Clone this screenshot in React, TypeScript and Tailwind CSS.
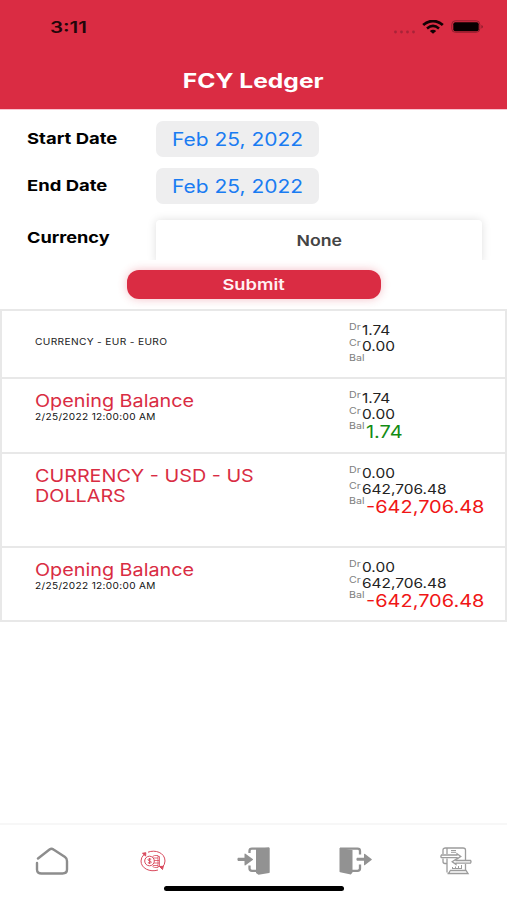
import type { ReactNode } from "react";

const ENTRIES = [
  {
    title: "CURRENCY - EUR - EURO",
    small: true,
    date: "",
    dr: "1.74",
    cr: "0.00",
    bal: "",
    height: "h-[68px]",
  },
  {
    title: "Opening Balance",
    date: "2/25/2022 12:00:00 AM",
    dr: "1.74",
    cr: "0.00",
    bal: "1.74",
    height: "h-[75px]",
  },
  {
    title: "CURRENCY - USD - US DOLLARS",
    date: "",
    dr: "0.00",
    cr: "642,706.48",
    bal: "-642,706.48",
    height: "h-[94px]",
  },
  {
    title: "Opening Balance",
    date: "2/25/2022 12:00:00 AM",
    dr: "0.00",
    cr: "642,706.48",
    bal: "-642,706.48",
    height: "h-[72px]",
  },
];

type Entry = (typeof ENTRIES)[number];

// Single line of widened lettering; the scale itself comes in through className
function Wide({ className, children }: { className: string; children: ReactNode }) {
  return <span className={`block w-max whitespace-nowrap ${className}`}>{children}</span>;
}

function StatusBar() {
  return (
    <div className="flex h-[54px] items-center pl-[50px] pr-[23px]">
      <Wide className="origin-left scale-x-[1.28] text-[16px] font-semibold text-[#23060a]">3:11</Wide>
      <div className="ml-auto flex items-center">
        <svg width="24" height="6" viewBox="0 0 24 6" className="mt-[9px]" fill="#a82338">
          <circle cx="2.500" cy="3" r="1.400" />
          <circle cx="8.500" cy="3" r="1.400" />
          <circle cx="14.500" cy="3" r="1.400" />
          <circle cx="20.500" cy="3" r="1.400" />
        </svg>
        <svg width="22" height="14" viewBox="0 0 22 14" className="ml-[5px]" fill="none" stroke="#120204">
          <path d="M1.2 5.1C7 -.3 15 -.3 20.800 5.1" strokeWidth="2.800" />
          <path d="M5 8.500c3.800-3.300 8.200-3.300 12 0" strokeWidth="2.500" />
          <path d="M7.800 11c2-1.600 4.400-1.600 6.400 0L11 13.700z" fill="#120204" stroke="none" />
        </svg>
        <svg width="33" height="14" viewBox="0 0 33 14" className="ml-[7px]">
          <rect x=".8" y=".8" width="28" height="11.500" rx="3.500" fill="none" stroke="#92202f" />
          <rect x="2.300" y="2.200" width="25.400" height="9" rx="2" fill="#080001" />
          <path d="M30.500 5c1.700.6 1.700 3 0 3.600z" fill="#7a1827" />
        </svg>
      </div>
    </div>
  );
}

function DateRow({ label, value }: { label: string; value: string }) {
  return (
    <div className="flex h-9 items-center pl-[27px]">
      <div className="w-[129px] pt-px">
        <Wide className="origin-left scale-x-[1.23] text-[15px] font-bold">{label}</Wide>
      </div>
      <div className="flex h-9 w-[163px] items-center rounded-[7px] bg-[#eeeeef] pl-4">
        <Wide className="origin-left scale-x-[1.165] text-[18px] text-[#1a7cf2]">{value}</Wide>
      </div>
    </div>
  );
}

function Amount({ label, value }: { label: string; value: string }) {
  return (
    <div className="flex h-[15.5px] items-start">
      <Wide className="w-[13px]! origin-left scale-x-[1.25] text-[8.5px] leading-[11px] text-[#808080]">{label}</Wide>
      <Wide className="origin-left scale-x-[1.145] text-[13.5px] leading-[17px] text-[#222]">{value}</Wide>
    </div>
  );
}

function LedgerRow({ entry }: { entry: Entry }) {
  const negative = entry.bal.startsWith("-");
  return (
    <li className={`flex pl-[33px] ${entry.height}`}>
      <div className="w-[314px]">
        {entry.small ? (
          <Wide className="mt-[25px] origin-left scale-x-[1.13] text-[9px] leading-[12px] tracking-[0.3px] text-[#222]">
            {entry.title}
          </Wide>
        ) : (
          <p className="mt-[12px] w-[205px] origin-left scale-x-[1.13] text-[17.5px] leading-[20px] text-[#d92c43]">
            {entry.title}
          </p>
        )}
        {entry.date && (
          <Wide className="origin-left scale-x-[1.12] text-[9px] leading-[11px] tracking-[0.3px] text-[#111]">
            {entry.date}
          </Wide>
        )}
      </div>
      <div className="pt-[11px]">
        <Amount label="Dr" value={entry.dr} />
        <Amount label="Cr" value={entry.cr} />
        <div className="flex items-start">
          <Wide className="w-[17px]! origin-left scale-x-[1.25] text-[8.5px] leading-[11px] text-[#808080]">Bal</Wide>
          <Wide
            className={`origin-left scale-x-[1.175] text-[17px] leading-[22px] ${negative ? "text-[#f01616]" : "text-[#148c14]"}`}
          >
            {entry.bal}
          </Wide>
        </div>
      </div>
    </li>
  );
}

function HomeIcon() {
  return (
    <svg width="34" height="28" viewBox="0 0 34 28" fill="none" stroke="#8d8d8d" strokeWidth="2.400" strokeLinecap="round">
      <path d="M3 11.500 14.500 2.500q2-1.500 4 0L30 10q2 1.400 2 4v8.500q0 4-4.500 4h-21Q2 26.500 2 22.500V16" />
    </svg>
  );
}

function ExchangeIcon() {
  return (
    <svg width="26" height="22" viewBox="0 0 26 22" fill="none" stroke="#d94a5d" strokeWidth="1">
      <path d="M8 2.200C15 -.6 25 2.500 25 11q0 3.500-2.800 6.500M18 20C10 22.500 1 18.500 1 11q0-3.500 3-6.500" />
      <path d="m2.500 3.300 3.300-.6-.2 3.300zM19.500 16.500l3.800-.2-.8 3.200z" fill="#d94a5d" />
      <path d="M12.500 6.500q1.500-1.500 5.500-1v12q-4 .4-5.500-1M13 8h5M14 10.500h5M14 13h5M13 15.500h5M18 6.500h1.500v10H18" strokeWidth=".8" />
      <circle cx="9.500" cy="11" r="4.800" fill="#fff" />
      <path d="M11.200 9.200q-3.200-1-3.200.5c0 1.500 3.300 1 3.300 2.500q0 1.500-3.400.6M9.600 8v6" />
    </svg>
  );
}

function DoorInIcon() {
  return (
    <svg width="34" height="28" viewBox="0 0 34 28" fill="#929292">
      <path d="M19 2 32 .6q.7 0 .7.700v24q0 .6-.6.700L21.500 27.800 19 26z" />
      <path d="M32 1.700H15q-2.500 0-2.500 2.300v2M12.500 18.500v3q0 2.300 2.500 2.300h5" fill="none" stroke="#929292" strokeWidth="2.300" />
      <path d="M1 10.700h6.500V7.200q0-.9 1-.4l7.200 5.100q.7.600 0 1.200l-7.200 5.100q-1 .5-1-.4v-3.900H1q-1.200-1.600 0-3.200" />
    </svg>
  );
}

function DoorOutIcon() {
  return (
    <svg width="33" height="28" viewBox="0 0 33 28" fill="#929292">
      <path d="M.5 1 13.500 3v22.500l-1.700 2L1.200 25.300q-.7-.2-.7-.9z" />
      <path d="M1 1.700h17.500Q21 1.700 21 4v3.500M21 17.500v4q0 2.300-2.500 2.300H13" fill="none" stroke="#929292" strokeWidth="2.300" />
      <path d="M18 10.700h7V7.300q0-.9 1-.4l6.500 5q.7.600 0 1.200l-6.500 5q-1 .5-1-.4v-3.900h-7q-1.200-1.600 0-3.100" />
    </svg>
  );
}

function ReportIcon() {
  return (
    <svg width="32" height="28" viewBox="0 0 32 28" fill="none" stroke="#9c9c9c" strokeWidth="1.300">
      <path d="M7 16.500H5q-2 0-2-2v-3M3 7V3q0-2 2.500-2H23q2.500 0 2.500 2v10M7 1v6M7 11.500v14M25.500 17v6.500" />
      <path d="M1.500 8H17V6.700l3.800 2.700-3.800 2.700v-1.400H1.500Q.3 9.400 1.500 8z" />
      <path d="M30.500 13.500H16v-1.300l-3.800 2.600 3.800 2.600v-1.300h14.500q1-1.300 0-2.600z" />
      <path d="M10 23.500h16l2 3H7.500q2 0 2.500-3" />
      <path d="M11 3.500h5M11 5.300h5M12 21.500h10M12.500 20v1M15.500 19.500v1.500M18.500 19v2M21.500 18v3.500" strokeWidth="1" />
    </svg>
  );
}

export default function App() {
  return (
    <div className="flex h-[900px] w-[507px] flex-col overflow-hidden bg-white font-['Inter','Liberation_Sans',sans-serif] text-black">
      <header className="h-[110px] shrink-0 border-b border-[#f9c5d0] bg-[#da2c43]">
        <StatusBar />
        <div className="flex h-[53px] items-center justify-center">
          <Wide className="scale-x-[1.23] text-[20px] font-bold text-white">FCY Ledger</Wide>
        </div>
      </header>

      <section className="flex h-[199px] shrink-0 flex-col pt-[11px]">
        <DateRow label="Start Date" value="Feb 25, 2022" />
        <div className="mt-[11px]">
          <DateRow label="End Date" value="Feb 25, 2022" />
        </div>
        <div className="mt-[5px] flex h-[51px] overflow-hidden pl-[27px]">
          <div className="w-[129px] pt-[18px]">
            <Wide className="origin-left scale-x-[1.21] text-[15px] font-bold">Currency</Wide>
          </div>
          <div className="mt-[11px] flex h-11 w-[326px] justify-center rounded-[4px] bg-white pt-[10px] shadow-[0_0_10px_rgba(0,0,0,0.13)]">
            <Wide className="scale-x-[1.18] text-[15px] font-semibold leading-[22px] text-[#444]">None</Wide>
          </div>
        </div>
        <button className="ml-[127px] mt-[10px] flex h-[29px] w-[254px] items-center justify-center rounded-[12px] bg-[#da2c43] pt-px shadow-[0_0_10px_rgba(218,44,67,0.3)]">
          <Wide className="scale-x-[1.22] text-[15px] font-semibold text-[#fff0f2]">Submit</Wide>
        </button>
      </section>

      <ul className="shrink-0 divide-y-2 divide-[#e8e8e8] border-2 border-[#e8e8e8]">
        {ENTRIES.map((entry, i) => (
          <LedgerRow key={i} entry={entry} />
        ))}
      </ul>

      <nav className="mt-auto h-[77px] shrink-0 border-t-2 border-[#f7f7f7]">
        <div className="grid h-[61px] grid-cols-5 place-items-center pl-px pt-[10px]">
          <HomeIcon />
          <ExchangeIcon />
          <DoorInIcon />
          <DoorOutIcon />
          <ReportIcon />
        </div>
        <div className="mx-auto h-[5px] w-[180px] rounded-full bg-black" />
      </nav>
    </div>
  );
}
